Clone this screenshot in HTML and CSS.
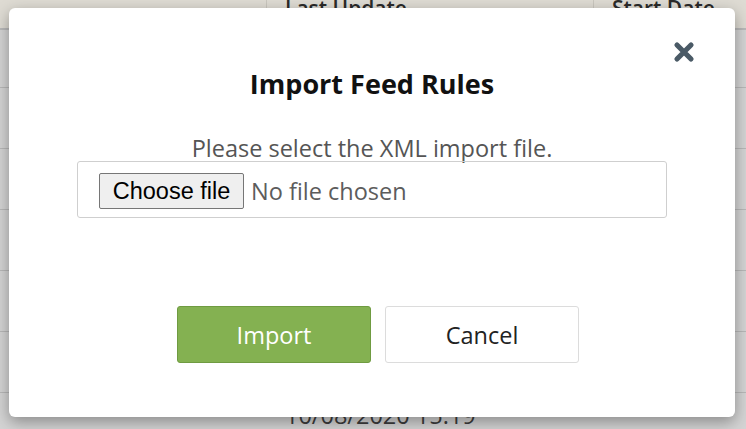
FILE: index.html
```html
<!DOCTYPE html>
<html>
<head>
<meta charset="utf-8">
<link rel="stylesheet" href="styles.css">
</head>
<body>
<div class="page">
  <div class="grid">
    <div class="grid-head">
      <div class="col c1"></div>
      <div class="col c2">Last Update</div>
      <div class="col c3">Start Date</div>
    </div>
    <div class="grid-row"></div>
    <div class="grid-row"></div>
    <div class="grid-row"></div>
    <div class="grid-row"></div>
    <div class="grid-row"></div>
    <div class="grid-row"></div>
    <div class="grid-row">
      <div class="col c1"></div>
      <div class="col c2 cell-text">10/08/2020 15:19</div>
      <div class="col c3"></div>
    </div>
  </div>

  <div class="modal">
    <button class="close" aria-label="Close">
      <svg width="22" height="22" viewBox="0 0 22 22"><path d="M4 4 L18 18 M18 4 L4 18" stroke="#4a5a66" stroke-width="5.2" stroke-linecap="round" fill="none"/></svg>
    </button>
    <h2 class="title">Import Feed Rules</h2>
    <p class="desc">Please select the XML import file.</p>
    <div class="file-box">
      <span class="file-btn">Choose file</span>
      <span class="file-name">No file chosen</span>
    </div>
    <div class="actions">
      <button class="btn btn-primary">Import</button>
      <button class="btn btn-default">Cancel</button>
    </div>
  </div>
</div>
</body>
</html>
```

FILE: styles.css
```css
html, body {
  margin: 0;
  padding: 0;
}
body {
  width: 746px;
  height: 429px;
  overflow: hidden;
  font-family: "Open Sans", "Noto Sans", sans-serif;
  background: #d3d3d3;
}
.page {
  position: relative;
  width: 746px;
  height: 429px;
  overflow: hidden;
}
.grid {
  display: flex;
  flex-direction: column;
}
.grid-head {
  display: flex;
  height: 28px;
  background: #dedbd3;
  border-bottom: 2px solid #b9b9b9;
}
.grid-head .col {
  font-size: 21px;
  font-weight: 600;
  color: #2a2a2a;
  box-sizing: border-box;
  padding-left: 18px;
}
.grid-head .c2, .grid-head .c3 {
  border-left: 1px solid #c9c6be;
  line-height: 0;
  padding-top: 8px;
}
.c1 { width: 266px; flex: none; }
.c2 { width: 327px; flex: none; }
.c3 { flex: 1; }
.grid-row {
  display: flex;
  height: 60px;
  border-bottom: 1px solid #b8b8b8;
  background: #d4d4d4;
}
.grid .grid-row:nth-child(2) { height: 57px; }
.cell-text {
  font-size: 23.5px;
  color: #3c3c3c;
  padding-left: 19px;
  padding-top: 6px;
  line-height: 32px;
  box-sizing: border-box;
}

.modal {
  position: absolute;
  left: 9px;
  top: 8px;
  width: 726px;
  height: 409px;
  box-sizing: border-box;
  background: #fff;
  border-radius: 6px;
  box-shadow: 0 5px 15px rgba(0, 0, 0, 0.35);
  padding: 61px 68px 0;
  display: flex;
  flex-direction: column;
  align-items: stretch;
}
.close {
  position: absolute;
  right: 40px;
  top: 33px;
  width: 22px;
  height: 22px;
  padding: 0;
  border: 0;
  background: none;
  display: flex;
}
.title {
  margin: 0;
  font-size: 27px;
  font-weight: 700;
  line-height: 30px;
  color: #111;
  text-align: center;
}
.desc {
  margin: 36px 0 0;
  font-size: 23.5px;
  line-height: 26px;
  color: #555;
  text-align: center;
}
.file-box {
  height: 57px;
  box-sizing: border-box;
  border: 1px solid #cfcfcf;
  border-radius: 3px;
  padding: 11px 21px 0;
  display: flex;
  align-items: flex-start;
  gap: 7px;
}
.file-btn {
  width: 145px;
  height: 36px;
  box-sizing: border-box;
  border: 1px solid #767676;
  border-radius: 2px;
  background: #efefef;
  font-family: "Liberation Sans", Arial, sans-serif;
  font-size: 23.5px;
  line-height: 34px;
  color: #000;
  text-align: center;
}
.file-name {
  font-size: 23.5px;
  line-height: 36px;
  color: #5c5c5c;
}
.actions {
  margin-top: 88px;
  display: flex;
  justify-content: center;
  gap: 14px;
  padding-left: 12px;
}
.btn {
  width: 194px;
  height: 57px;
  box-sizing: border-box;
  border-radius: 3px;
  font-family: "Open Sans", sans-serif;
  font-size: 23.5px;
  padding: 0;
}
.btn-primary {
  background: #84b151;
  border: 1px solid #6f9b41;
  color: #fff;
}
.btn-default {
  background: #fff;
  border: 1px solid #dcdcdc;
  color: #222;
}
```
